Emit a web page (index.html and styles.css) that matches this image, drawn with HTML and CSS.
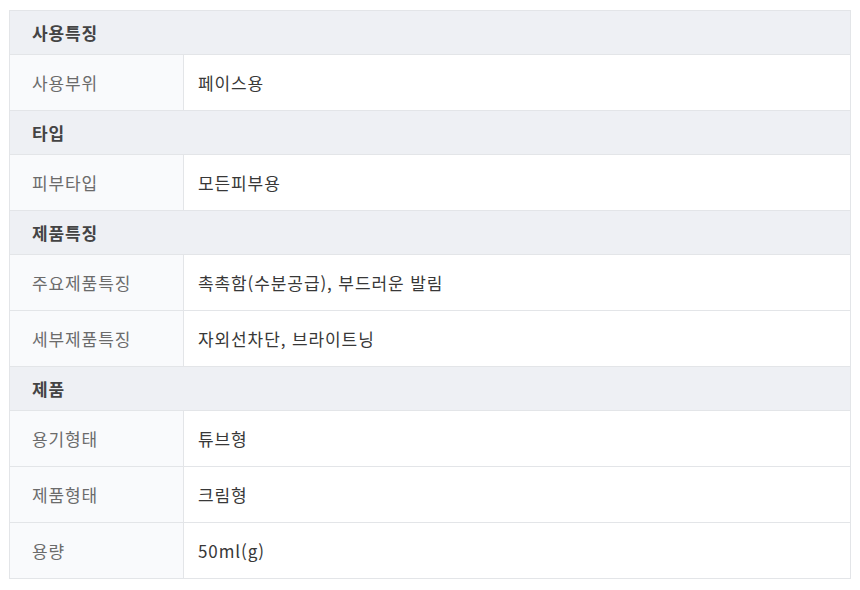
FILE: index.html
```html
<!DOCTYPE html>
<html lang="ko">
<head>
<meta charset="utf-8">
<link rel="stylesheet" href="styles.css">
</head>
<body>
<table class="spec">
  <tr class="sec"><th colspan="2">사용특징</th></tr>
  <tr><td class="lbl">사용부위</td><td class="val">페이스용</td></tr>
  <tr class="sec"><th colspan="2">타입</th></tr>
  <tr><td class="lbl">피부타입</td><td class="val">모든피부용</td></tr>
  <tr class="sec"><th colspan="2">제품특징</th></tr>
  <tr><td class="lbl">주요제품특징</td><td class="val">촉촉함(수분공급), 부드러운 발림</td></tr>
  <tr><td class="lbl">세부제품특징</td><td class="val">자외선차단, 브라이트닝</td></tr>
  <tr class="sec"><th colspan="2">제품</th></tr>
  <tr><td class="lbl">용기형태</td><td class="val">튜브형</td></tr>
  <tr><td class="lbl">제품형태</td><td class="val">크림형</td></tr>
  <tr><td class="lbl">용량</td><td class="val">50ml(g)</td></tr>
</table>
</body>
</html>
```

FILE: styles.css
```css
html, body {
  margin: 0;
  padding: 0;
  background: #ffffff;
}
body {
  padding: 10px 9px 0 9px;
  font-family: "Noto Sans CJK KR", "Noto Sans", sans-serif;
  font-size: 17px;
  letter-spacing: 0.9px;
}
.spec {
  width: 842px;
  border-collapse: collapse;
  border: 1px solid #e3e5e8;
}
.spec th, .spec td {
  border-top: 1px solid #e3e5e8;
  border-bottom: 1px solid #e3e5e8;
  text-align: left;
  padding: 0;
}
.sec th {
  height: 43px;
  background: #eef0f4;
  color: #444444;
  font-weight: 700;
  padding-left: 22px;
}
.lbl {
  width: 151px;
  height: 55px;
  background: #f9fafc;
  color: #6b6b6b;
  padding-left: 22px !important;
  border-right: 1px solid #e3e5e8;
}
.val {
  color: #383838;
  padding-left: 14px !important;
}
```
